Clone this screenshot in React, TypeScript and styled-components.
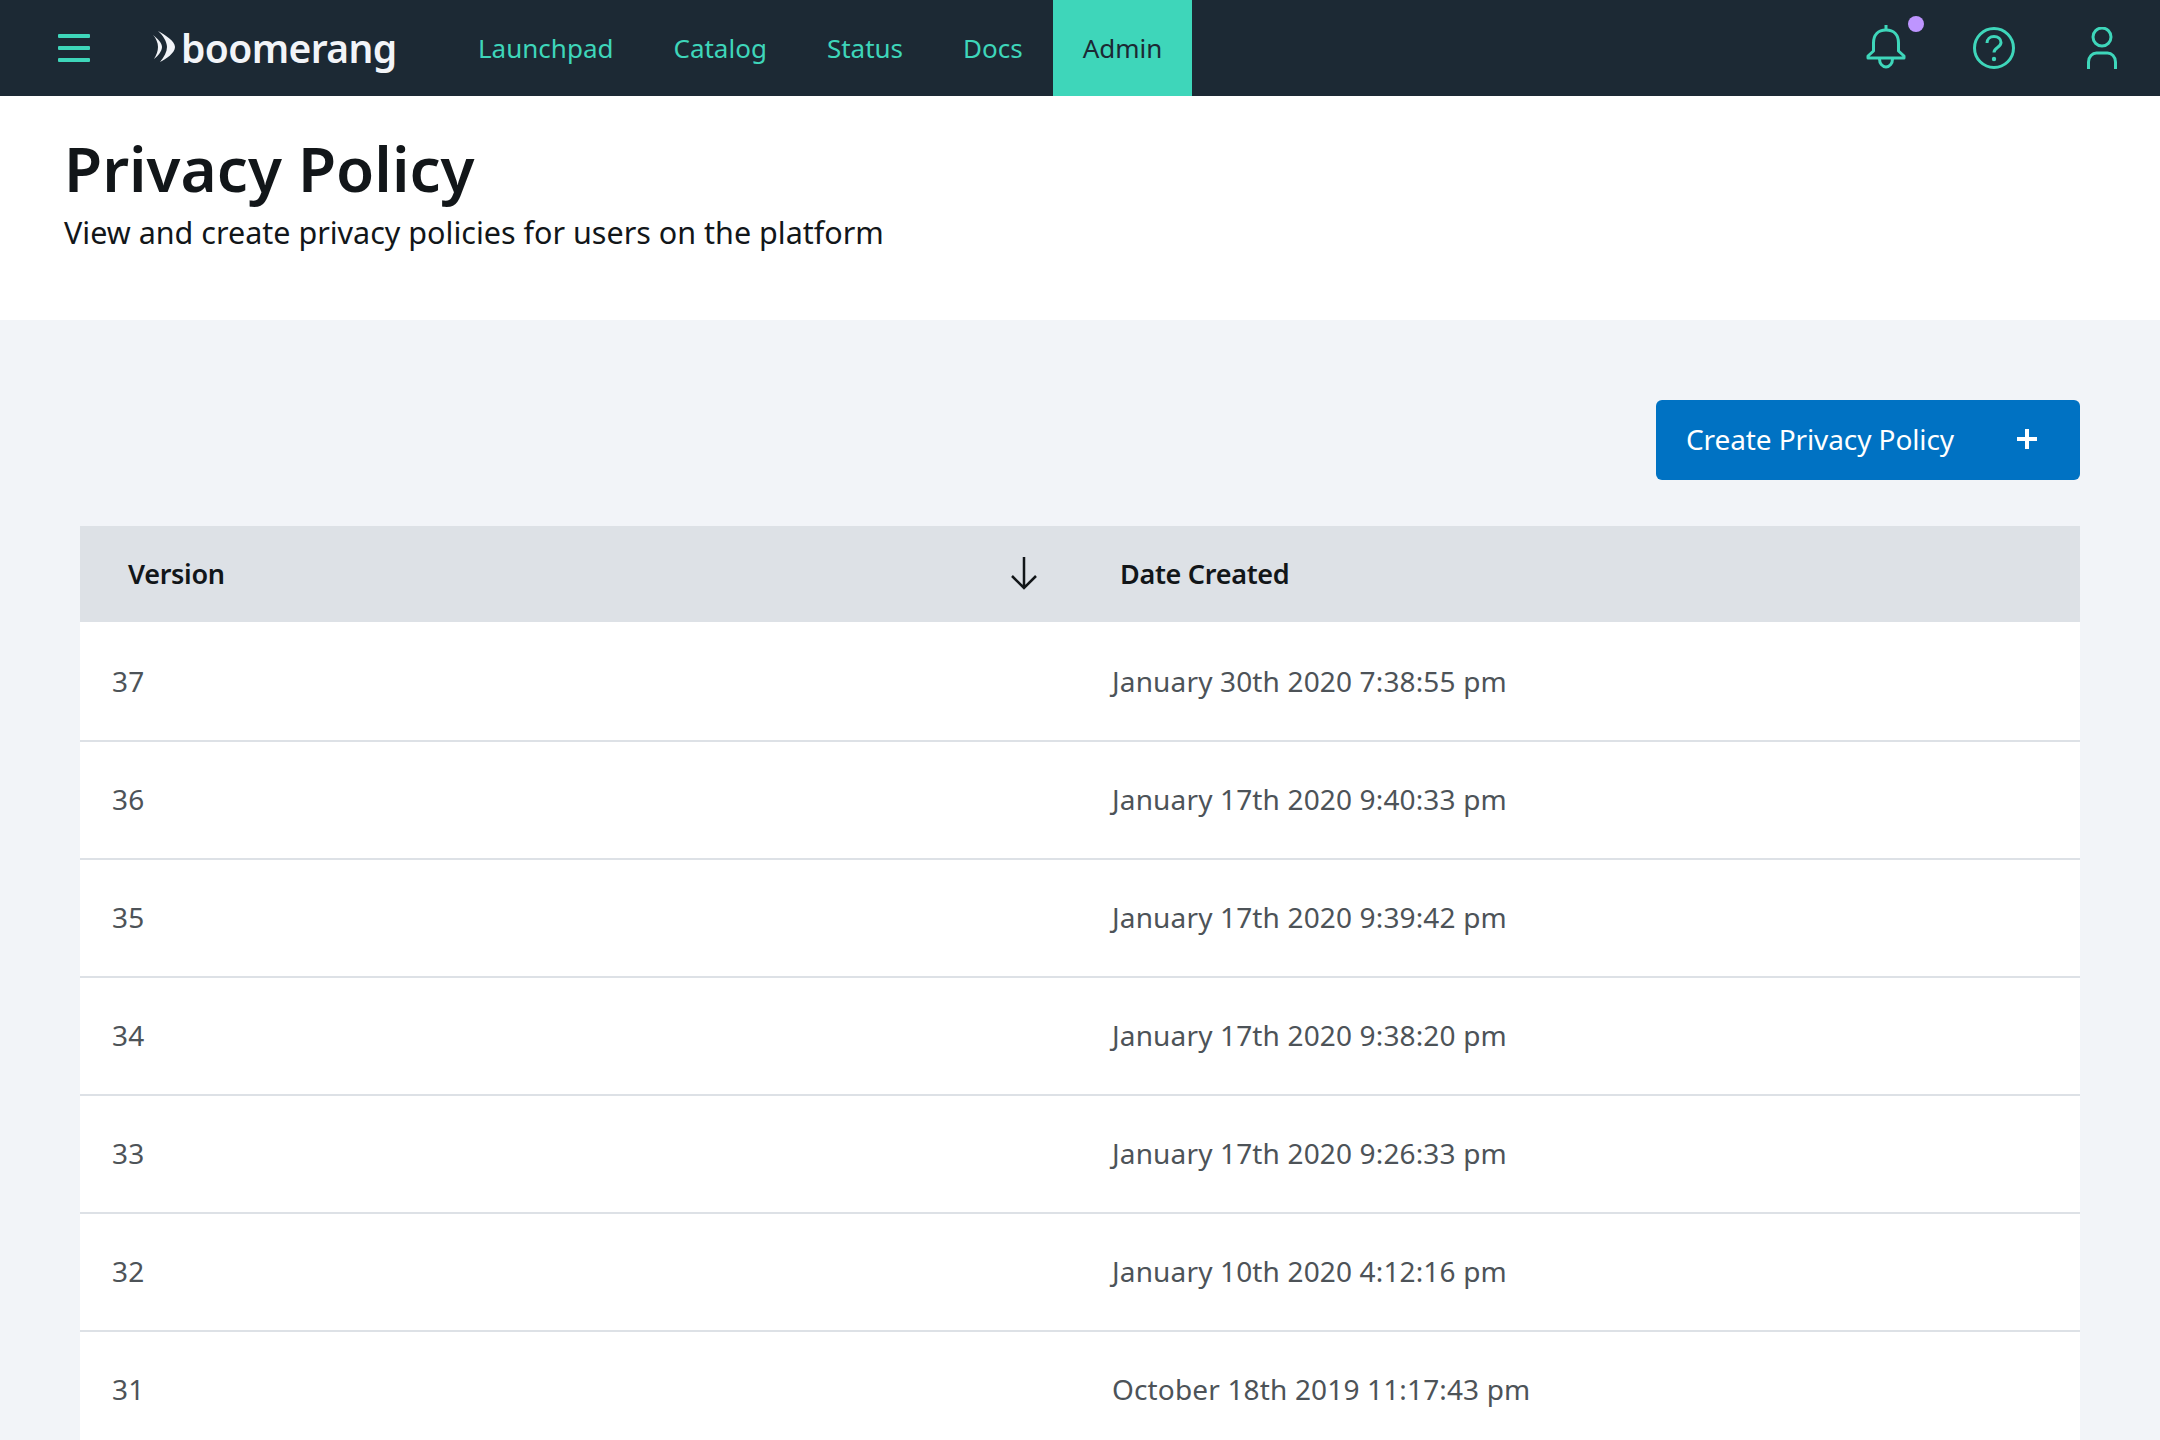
import React from "react";
import styled, { createGlobalStyle } from "styled-components";

const GlobalStyle = createGlobalStyle`
  html, body {
    margin: 0;
    padding: 0;
    background: #f2f4f8;
    font-family: "Noto Sans", "Liberation Sans", sans-serif;
  }
`;

const Page = styled.div`
  height: 100vh;
  overflow: hidden;
  display: flex;
  flex-direction: column;
`;

const TopBar = styled.header`
  flex: none;
  height: 96px;
  background: #1c2934;
  display: flex;
  align-items: stretch;
`;

const MenuButton = styled.button`
  width: 148px;
  padding: 0 0 0 58px;
  border: 0;
  background: none;
  display: flex;
  flex-direction: column;
  justify-content: center;
  gap: 8px;
  span {
    width: 32px;
    height: 4px;
    border-radius: 1px;
    background: #3ed6ba;
  }
`;

const Logo = styled.div`
  width: 300px;
  padding: 0 0 2px 5px;
  box-sizing: border-box;
  display: flex;
  align-items: center;
  gap: 6px;
  color: #f2f4f8;
  font-size: 39px;
  font-weight: 600;
  letter-spacing: -0.6px;
  svg {
    flex: none;
  }
`;

const Nav = styled.nav`
  display: flex;
`;

const NavItem = styled.a<{ $active?: boolean }>`
  padding: 0 30px;
  display: flex;
  align-items: center;
  font-size: 26px;
  color: ${(p) => (p.$active ? "#1c2934" : "#3ed6ba")};
  background: ${(p) => (p.$active ? "#3ed6ba" : "transparent")};
`;

const Utilities = styled.div`
  margin-left: auto;
  padding-right: 4px;
  display: flex;
  align-items: center;
`;

const UtilityButton = styled.button`
  position: relative;
  width: 108px;
  height: 96px;
  padding: 0;
  border: 0;
  background: none;
  display: flex;
  align-items: center;
  justify-content: center;
  svg {
    display: block;
  }
`;

const NotificationDot = styled.span`
  position: absolute;
  top: 16px;
  left: 76px;
  width: 16px;
  height: 16px;
  border-radius: 50%;
  background: #be95ff;
`;

const PageHeader = styled.section`
  flex: none;
  height: 224px;
  box-sizing: border-box;
  padding: 34px 64px 0;
  background: #fff;
`;

const Title = styled.h1`
  margin: 0;
  font-size: 62px;
  line-height: 76px;
  font-weight: 600;
  color: #121619;
`;

const Subtitle = styled.p`
  margin: 4px 0 0;
  font-size: 30.500px;
  line-height: 44px;
  color: #121619;
`;

const Content = styled.main`
  flex: 1;
  padding: 80px 80px 0;
`;

const Toolbar = styled.div`
  display: flex;
  justify-content: flex-end;
  margin-bottom: 46px;
`;

const PrimaryButton = styled.button`
  width: 424px;
  height: 80px;
  padding: 0 42px 2px 30px;
  border: 0;
  border-radius: 6px;
  background: #0072c3;
  color: #fff;
  font: inherit;
  font-size: 28px;
  letter-spacing: -0.1px;
  display: flex;
  align-items: center;
  justify-content: space-between;
`;

const Table = styled.div`
  display: grid;
  grid-template-columns: 1000px 1000px;
`;

const HeaderCell = styled.div<{ $inset: number }>`
  height: 98px;
  box-sizing: border-box;
  padding: 0 42px 2px ${(p) => p.$inset}px;
  background: #dde1e6;
  border-bottom: 2px solid #fff;
  color: #121619;
  font-size: 27px;
  font-weight: 600;
  letter-spacing: -0.3px;
  display: flex;
  align-items: center;
  justify-content: space-between;
`;

const Cell = styled.div`
  height: 118px;
  box-sizing: border-box;
  padding: 0 0 2px 32px;
  background: #fff;
  border-bottom: 2px solid #dde1e6;
  color: #4d5358;
  font-size: 28px;
  letter-spacing: 0.15px;
  display: flex;
  align-items: center;
`;

const versions = [
  { version: 37, created: "January 30th 2020 7:38:55 pm" },
  { version: 36, created: "January 17th 2020 9:40:33 pm" },
  { version: 35, created: "January 17th 2020 9:39:42 pm" },
  { version: 34, created: "January 17th 2020 9:38:20 pm" },
  { version: 33, created: "January 17th 2020 9:26:33 pm" },
  { version: 32, created: "January 10th 2020 4:12:16 pm" },
  { version: 31, created: "October 18th 2019 11:17:43 pm" },
];

const LogoMark = () => (
  <svg width="22" height="32" viewBox="0 0 22 32" fill="#f2f4f8">
    <path d="M0 4C5 8 9 12 9 16C9 20 5 25 1 28C3.500 24 5 20 5 16C5 12 3 7 0 4Z" />
    <path d="M5 0C12 4 22 10 22 16C22 22 13 28 7 31C11 26 14 21 14 16C14 11 10 4 5 0Z" />
  </svg>
);

const BellIcon = () => (
  <svg width="40" height="46" viewBox="0 0 40 46" fill="none" stroke="#3ed6ba" strokeWidth="3">
    <path d="M20 0v5" />
    <path d="M2 33v-2l5.500-5V18C7.500 10 12 5 20 5s12.500 5 12.500 13v8l5.500 5v2z" strokeLinejoin="round" />
    <path d="M13.500 34a6.500 8 0 0 0 13 0" />
  </svg>
);

const HelpIcon = () => (
  <svg width="42" height="42" viewBox="0 0 42 42" fill="none" stroke="#3ed6ba" strokeWidth="3">
    <circle cx="21" cy="21" r="19.500" />
    <path d="M14 16c0-4 3-6.500 7-6.500s7 2.500 7 6c0 5-7 5-7 10" />
    <circle cx="21" cy="32" r="2.200" fill="#3ed6ba" stroke="none" />
  </svg>
);

const UserIcon = () => (
  <svg width="30" height="42" viewBox="0 0 30 42" fill="none" stroke="#3ed6ba" strokeWidth="3">
    <circle cx="15" cy="10" r="9" />
    <path d="M1.500 42v-7c0-5.500 4-9 8-9h11c4 0 8 3.500 8 9v7" />
  </svg>
);

const PlusIcon = () => (
  <svg width="22" height="22" viewBox="0 0 22 22" fill="none" stroke="#fff" strokeWidth="4">
    <path d="M11 1v20M1 11h20" />
  </svg>
);

const SortDownIcon = () => (
  <svg width="28" height="34" viewBox="0 0 28 34" fill="none" stroke="#121619" strokeWidth="2.500">
    <path d="M14 1v31M2 20l12 12 12-12" />
  </svg>
);

export default function App() {
  return (
    <Page>
      <GlobalStyle />
      <TopBar>
        <MenuButton aria-label="Menu">
          <span />
          <span />
          <span />
        </MenuButton>
        <Logo>
          <LogoMark />
          boomerang
        </Logo>
        <Nav>
          <NavItem>Launchpad</NavItem>
          <NavItem>Catalog</NavItem>
          <NavItem>Status</NavItem>
          <NavItem>Docs</NavItem>
          <NavItem $active>Admin</NavItem>
        </Nav>
        <Utilities>
          <UtilityButton aria-label="Notifications">
            <BellIcon />
            <NotificationDot />
          </UtilityButton>
          <UtilityButton aria-label="Help">
            <HelpIcon />
          </UtilityButton>
          <UtilityButton aria-label="Profile">
            <UserIcon />
          </UtilityButton>
        </Utilities>
      </TopBar>
      <PageHeader>
        <Title>Privacy Policy</Title>
        <Subtitle>View and create privacy policies for users on the platform</Subtitle>
      </PageHeader>
      <Content>
        <Toolbar>
          <PrimaryButton>
            Create Privacy Policy
            <PlusIcon />
          </PrimaryButton>
        </Toolbar>
        <Table>
          <HeaderCell $inset={48}>
            Version
            <SortDownIcon />
          </HeaderCell>
          <HeaderCell $inset={40}>Date Created</HeaderCell>
          {versions.map((row) => (
            <React.Fragment key={row.version}>
              <Cell>{row.version}</Cell>
              <Cell>{row.created}</Cell>
            </React.Fragment>
          ))}
        </Table>
      </Content>
    </Page>
  );
}
